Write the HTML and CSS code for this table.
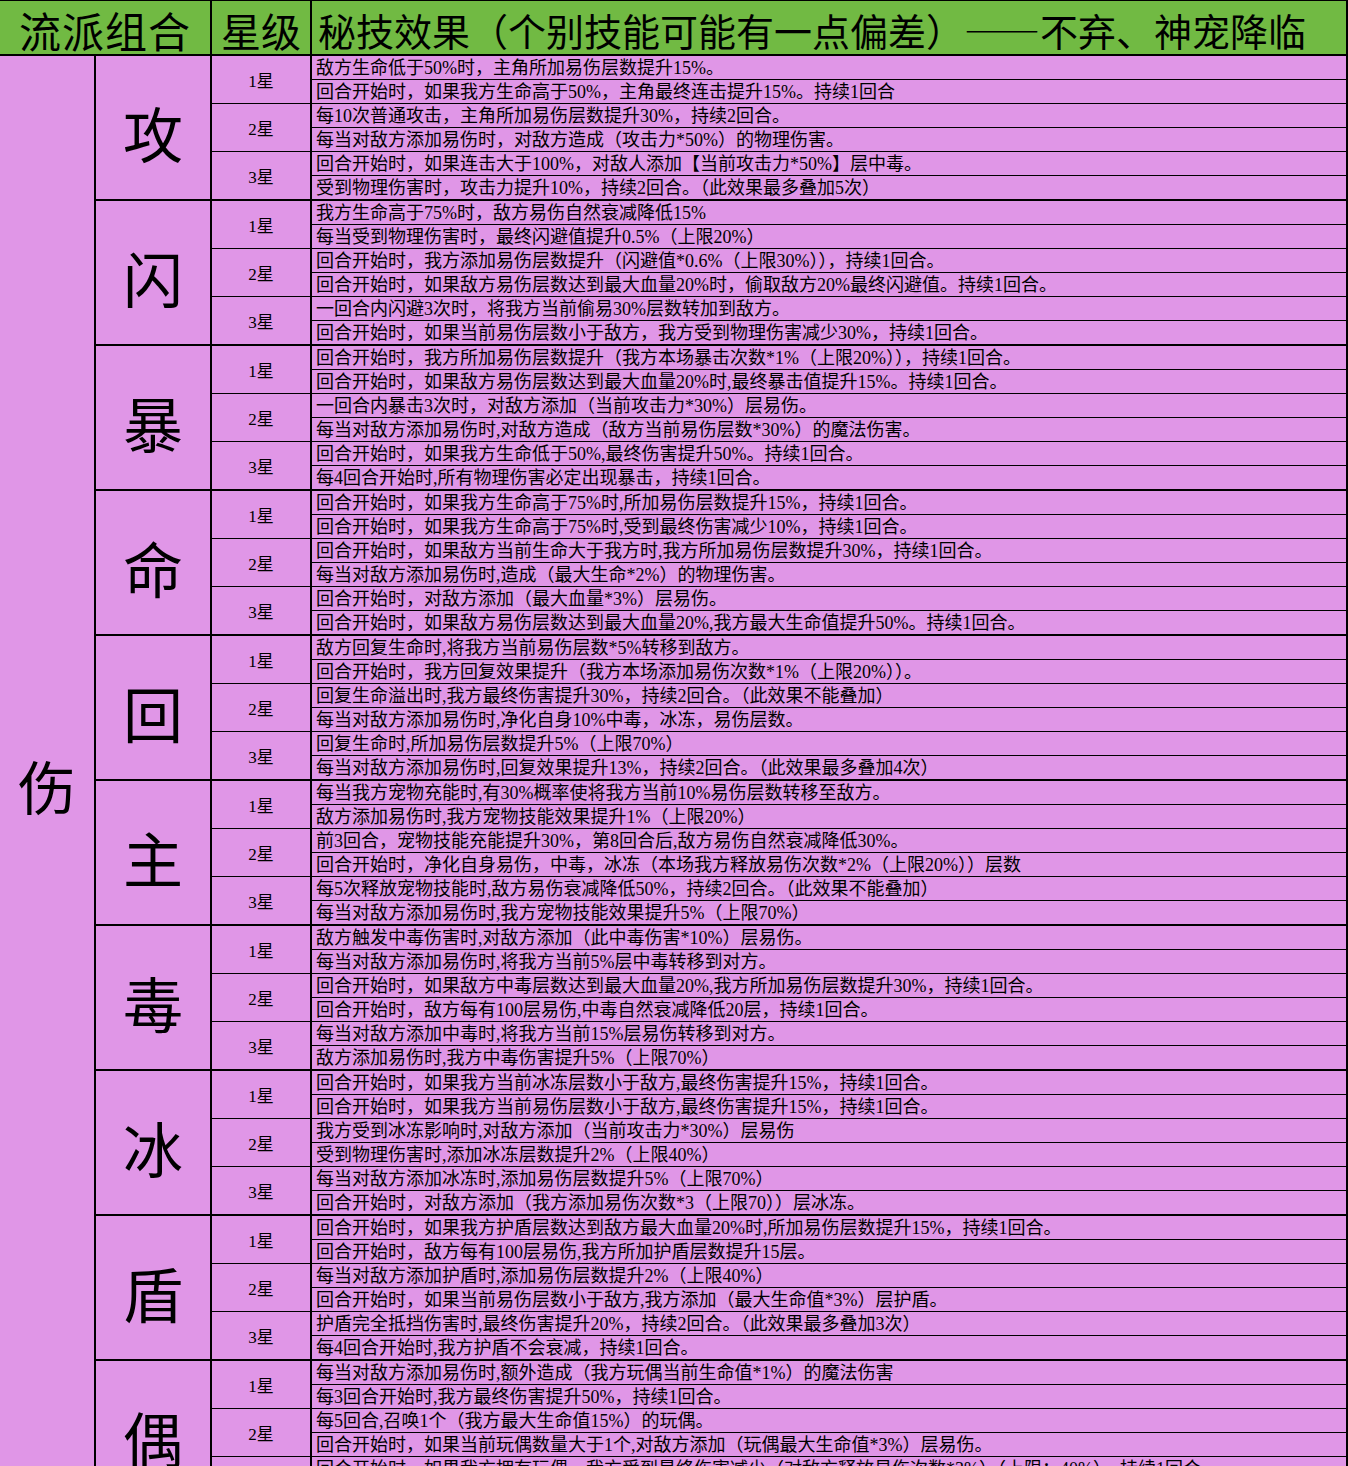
FILE: index.html
```html
<!DOCTYPE html>
<html lang="zh-CN">
<head>
<meta charset="utf-8">
<title>流派组合 秘技效果</title>
<link rel="stylesheet" href="styles.css">
</head>
<body>
<div class="sheet">
  <div class="head">
    <div class="head-cell h-group">流派组合</div>
    <div class="head-cell h-star">星级</div>
    <div class="head-cell h-effect">秘技效果（个别技能可能有一点偏差）——不弃、神宠降临</div>
  </div>
  <div class="body">
    <div class="school">伤</div>
    <div class="groups">
      <div class="group">
        <div class="element">攻</div>
        <div class="stars">
          <div class="star"><div class="star-label">1星</div><div class="effects">
            <div class="effect">敌方生命低于50%时，主角所加易伤层数提升15%。</div>
            <div class="effect">回合开始时，如果我方生命高于50%，主角最终连击提升15%。持续1回合</div>
          </div></div>
          <div class="star"><div class="star-label">2星</div><div class="effects">
            <div class="effect">每10次普通攻击，主角所加易伤层数提升30%，持续2回合。</div>
            <div class="effect">每当对敌方添加易伤时，对敌方造成（攻击力*50%）的物理伤害。</div>
          </div></div>
          <div class="star"><div class="star-label">3星</div><div class="effects">
            <div class="effect">回合开始时，如果连击大于100%，对敌人添加【当前攻击力*50%】层中毒。</div>
            <div class="effect">受到物理伤害时，攻击力提升10%，持续2回合。（此效果最多叠加5次）</div>
          </div></div>
        </div>
      </div>
      <div class="group">
        <div class="element">闪</div>
        <div class="stars">
          <div class="star"><div class="star-label">1星</div><div class="effects">
            <div class="effect">我方生命高于75%时，敌方易伤自然衰减降低15%</div>
            <div class="effect">每当受到物理伤害时，最终闪避值提升0.5%（上限20%）</div>
          </div></div>
          <div class="star"><div class="star-label">2星</div><div class="effects">
            <div class="effect">回合开始时，我方添加易伤层数提升（闪避值*0.6%（上限30%）），持续1回合。</div>
            <div class="effect">回合开始时，如果敌方易伤层数达到最大血量20%时，偷取敌方20%最终闪避值。持续1回合。</div>
          </div></div>
          <div class="star"><div class="star-label">3星</div><div class="effects">
            <div class="effect">一回合内闪避3次时，将我方当前偷易30%层数转加到敌方。</div>
            <div class="effect">回合开始时，如果当前易伤层数小于敌方，我方受到物理伤害减少30%，持续1回合。</div>
          </div></div>
        </div>
      </div>
      <div class="group">
        <div class="element">暴</div>
        <div class="stars">
          <div class="star"><div class="star-label">1星</div><div class="effects">
            <div class="effect">回合开始时，我方所加易伤层数提升（我方本场暴击次数*1%（上限20%）），持续1回合。</div>
            <div class="effect">回合开始时，如果敌方易伤层数达到最大血量20%时,最终暴击值提升15%。持续1回合。</div>
          </div></div>
          <div class="star"><div class="star-label">2星</div><div class="effects">
            <div class="effect">一回合内暴击3次时，对敌方添加（当前攻击力*30%）层易伤。</div>
            <div class="effect">每当对敌方添加易伤时,对敌方造成（敌方当前易伤层数*30%）的魔法伤害。</div>
          </div></div>
          <div class="star"><div class="star-label">3星</div><div class="effects">
            <div class="effect">回合开始时，如果我方生命低于50%,最终伤害提升50%。持续1回合。</div>
            <div class="effect">每4回合开始时,所有物理伤害必定出现暴击，持续1回合。</div>
          </div></div>
        </div>
      </div>
      <div class="group">
        <div class="element">命</div>
        <div class="stars">
          <div class="star"><div class="star-label">1星</div><div class="effects">
            <div class="effect">回合开始时，如果我方生命高于75%时,所加易伤层数提升15%，持续1回合。</div>
            <div class="effect">回合开始时，如果我方生命高于75%时,受到最终伤害减少10%，持续1回合。</div>
          </div></div>
          <div class="star"><div class="star-label">2星</div><div class="effects">
            <div class="effect">回合开始时，如果敌方当前生命大于我方时,我方所加易伤层数提升30%，持续1回合。</div>
            <div class="effect">每当对敌方添加易伤时,造成（最大生命*2%）的物理伤害。</div>
          </div></div>
          <div class="star"><div class="star-label">3星</div><div class="effects">
            <div class="effect">回合开始时，对敌方添加（最大血量*3%）层易伤。</div>
            <div class="effect">回合开始时，如果敌方易伤层数达到最大血量20%,我方最大生命值提升50%。持续1回合。</div>
          </div></div>
        </div>
      </div>
      <div class="group">
        <div class="element">回</div>
        <div class="stars">
          <div class="star"><div class="star-label">1星</div><div class="effects">
            <div class="effect">敌方回复生命时,将我方当前易伤层数*5%转移到敌方。</div>
            <div class="effect">回合开始时，我方回复效果提升（我方本场添加易伤次数*1%（上限20%））。</div>
          </div></div>
          <div class="star"><div class="star-label">2星</div><div class="effects">
            <div class="effect">回复生命溢出时,我方最终伤害提升30%，持续2回合。（此效果不能叠加）</div>
            <div class="effect">每当对敌方添加易伤时,净化自身10%中毒，冰冻，易伤层数。</div>
          </div></div>
          <div class="star"><div class="star-label">3星</div><div class="effects">
            <div class="effect">回复生命时,所加易伤层数提升5%（上限70%）</div>
            <div class="effect">每当对敌方添加易伤时,回复效果提升13%，持续2回合。（此效果最多叠加4次）</div>
          </div></div>
        </div>
      </div>
      <div class="group">
        <div class="element">主</div>
        <div class="stars">
          <div class="star"><div class="star-label">1星</div><div class="effects">
            <div class="effect">每当我方宠物充能时,有30%概率使将我方当前10%易伤层数转移至敌方。</div>
            <div class="effect">敌方添加易伤时,我方宠物技能效果提升1%（上限20%）</div>
          </div></div>
          <div class="star"><div class="star-label">2星</div><div class="effects">
            <div class="effect">前3回合，宠物技能充能提升30%，第8回合后,敌方易伤自然衰减降低30%。</div>
            <div class="effect">回合开始时，净化自身易伤，中毒，冰冻（本场我方释放易伤次数*2%（上限20%））层数</div>
          </div></div>
          <div class="star"><div class="star-label">3星</div><div class="effects">
            <div class="effect">每5次释放宠物技能时,敌方易伤衰减降低50%，持续2回合。（此效果不能叠加）</div>
            <div class="effect">每当对敌方添加易伤时,我方宠物技能效果提升5%（上限70%）</div>
          </div></div>
        </div>
      </div>
      <div class="group">
        <div class="element">毒</div>
        <div class="stars">
          <div class="star"><div class="star-label">1星</div><div class="effects">
            <div class="effect">敌方触发中毒伤害时,对敌方添加（此中毒伤害*10%）层易伤。</div>
            <div class="effect">每当对敌方添加易伤时,将我方当前5%层中毒转移到对方。</div>
          </div></div>
          <div class="star"><div class="star-label">2星</div><div class="effects">
            <div class="effect">回合开始时，如果敌方中毒层数达到最大血量20%,我方所加易伤层数提升30%，持续1回合。</div>
            <div class="effect">回合开始时，敌方每有100层易伤,中毒自然衰减降低20层，持续1回合。</div>
          </div></div>
          <div class="star"><div class="star-label">3星</div><div class="effects">
            <div class="effect">每当对敌方添加中毒时,将我方当前15%层易伤转移到对方。</div>
            <div class="effect">敌方添加易伤时,我方中毒伤害提升5%（上限70%）</div>
          </div></div>
        </div>
      </div>
      <div class="group">
        <div class="element">冰</div>
        <div class="stars">
          <div class="star"><div class="star-label">1星</div><div class="effects">
            <div class="effect">回合开始时，如果我方当前冰冻层数小于敌方,最终伤害提升15%，持续1回合。</div>
            <div class="effect">回合开始时，如果我方当前易伤层数小于敌方,最终伤害提升15%，持续1回合。</div>
          </div></div>
          <div class="star"><div class="star-label">2星</div><div class="effects">
            <div class="effect">我方受到冰冻影响时,对敌方添加（当前攻击力*30%）层易伤</div>
            <div class="effect">受到物理伤害时,添加冰冻层数提升2%（上限40%）</div>
          </div></div>
          <div class="star"><div class="star-label">3星</div><div class="effects">
            <div class="effect">每当对敌方添加冰冻时,添加易伤层数提升5%（上限70%）</div>
            <div class="effect">回合开始时，对敌方添加（我方添加易伤次数*3（上限70））层冰冻。</div>
          </div></div>
        </div>
      </div>
      <div class="group">
        <div class="element">盾</div>
        <div class="stars">
          <div class="star"><div class="star-label">1星</div><div class="effects">
            <div class="effect">回合开始时，如果我方护盾层数达到敌方最大血量20%时,所加易伤层数提升15%，持续1回合。</div>
            <div class="effect">回合开始时，敌方每有100层易伤,我方所加护盾层数提升15层。</div>
          </div></div>
          <div class="star"><div class="star-label">2星</div><div class="effects">
            <div class="effect">每当对敌方添加护盾时,添加易伤层数提升2%（上限40%）</div>
            <div class="effect">回合开始时，如果当前易伤层数小于敌方,我方添加（最大生命值*3%）层护盾。</div>
          </div></div>
          <div class="star"><div class="star-label">3星</div><div class="effects">
            <div class="effect">护盾完全抵挡伤害时,最终伤害提升20%，持续2回合。（此效果最多叠加3次）</div>
            <div class="effect">每4回合开始时,我方护盾不会衰减，持续1回合。</div>
          </div></div>
        </div>
      </div>
      <div class="group">
        <div class="element">偶</div>
        <div class="stars">
          <div class="star"><div class="star-label">1星</div><div class="effects">
            <div class="effect">每当对敌方添加易伤时,额外造成（我方玩偶当前生命值*1%）的魔法伤害</div>
            <div class="effect">每3回合开始时,我方最终伤害提升50%，持续1回合。</div>
          </div></div>
          <div class="star"><div class="star-label">2星</div><div class="effects">
            <div class="effect">每5回合,召唤1个（我方最大生命值15%）的玩偶。</div>
            <div class="effect">回合开始时，如果当前玩偶数量大于1个,对敌方添加（玩偶最大生命值*3%）层易伤。</div>
          </div></div>
          <div class="star"><div class="star-label">3星</div><div class="effects">
            <div class="effect">回合开始时，如果我方拥有玩偶，我方受到最终伤害减少（对敌方释放易伤次数*3%）（上限：40%），持续1回合。</div>
            <div class="effect"></div>
          </div></div>
        </div>
      </div>
    </div>
  </div>
</div>
</body>
</html>
```

FILE: styles.css
```css
* {
  box-sizing: border-box;
}

html,
body {
  margin: 0;
  padding: 0;
}

body {
  background: #ffffff;
  color: #000000;
  font-family: "Noto Sans CJK SC", "Noto Sans", sans-serif;
}

.sheet {
  width: 1348px;
}

.head {
  display: flex;
  height: 56px;
  background: #71ba43;
  border-top: 1px solid #000;
  border-bottom: 2px solid #000;
}

.head-cell {
  display: flex;
  align-items: center;
  border-right: 2px solid #000;
  white-space: nowrap;
  line-height: 48px;
  padding-top: 4px;
}

.h-group {
  width: 212px;
  justify-content: center;
  font-size: 42px;
  letter-spacing: 1px;
}

.h-star {
  width: 100px;
  justify-content: center;
  font-size: 40px;
}

.h-effect {
  flex: 1;
  padding-left: 6px;
  font-size: 38px;
}

.body {
  display: flex;
  background: #e096e7;
}

.school {
  width: 96px;
  flex: none;
  border-right: 2px solid #000;
  display: flex;
  align-items: center;
  justify-content: center;
  font-size: 58px;
  padding-top: 8px;
}

.groups {
  flex: 1;
}

.group {
  display: flex;
  height: 145px;
  border-bottom: 2px solid #000;
}

.element {
  width: 116px;
  flex: none;
  border-right: 2px solid #000;
  display: flex;
  align-items: center;
  justify-content: center;
  font-size: 60px;
  padding-top: 8px;
}

.stars {
  flex: 1;
  display: flex;
  flex-direction: column;
}

.star {
  display: flex;
  height: 48px;
  border-bottom: 1px solid #000;
}

.star:last-child {
  height: 47px;
  border-bottom: 0;
}

.star-label {
  width: 100px;
  flex: none;
  border-right: 2px solid #000;
  display: flex;
  align-items: center;
  justify-content: center;
  font-family: "Liberation Serif", "Noto Sans CJK SC", serif;
  font-size: 17px;
}

.effects {
  flex: 1;
  display: flex;
  flex-direction: column;
  border-right: 2px solid #000;
}

.effect {
  height: 24px;
  line-height: 21px;
  padding-top: 2px;
  border-bottom: 1px solid #000;
  padding-left: 4px;
  font-family: "Liberation Sans Narrow", "Liberation Serif", "Noto Sans CJK SC", sans-serif;
  font-size: 18px;
  white-space: nowrap;
}

.effect:last-child {
  height: 23px;
  border-bottom: 0;
}
```
